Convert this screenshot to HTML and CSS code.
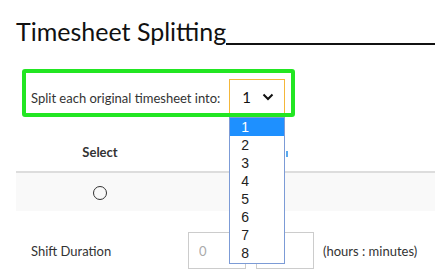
FILE: index.html
```html
<!DOCTYPE html>
<html lang="en">
<head>
    <meta charset="UTF-8">
    <title>Timesheet Splitting</title>
    <link rel="stylesheet" href="styles.css">
</head>
<body>

<div class="page">
    <h1 class="title">Timesheet Splitting<span class="rule"></span></h1>

    <div class="split-box">
        <span class="split-label">Split each original timesheet into:</span>
        <div class="select-wrap">
            <div class="fake-select">
                <span>1</span>
                <svg class="chevron" width="12" height="8" viewBox="0 0 12 8"><path d="M1.5 1.5 L6 6 L10.5 1.5" fill="none" stroke="#111" stroke-width="2"/></svg>
            </div>
            <ul class="options">
                <li class="active">1</li>
                <li>2</li>
                <li>3</li>
                <li>4</li>
                <li>5</li>
                <li>6</li>
                <li>7</li>
                <li>8</li>
            </ul>
        </div>
    </div>

    <table class="shifts">
        <thead>
            <tr>
                <th class="col-select">Select</th>
                <th class="col-rest"><span class="link-bit"></span></th>
            </tr>
        </thead>
        <tbody>
            <tr>
                <td class="col-select"><span class="radio"></span></td>
                <td></td>
            </tr>
        </tbody>
    </table>

    <div class="duration">
        <span class="duration-label">Shift Duration</span>
        <input type="text" class="time-input" placeholder="0">
        <input type="text" class="time-input">
        <span class="hint">(hours : minutes)</span>
    </div>
</div>

</body>
</html>
```

FILE: styles.css
```css
body {
    font-family: Lato, "Open Sans", sans-serif;
    color: #333;
    background: white;
    margin: 0;
}
.page {
    padding: 0 0 0 16px;
    overflow: hidden;
    height: 275px;
}
.title {
    display: flex;
    font-size: 25px;
    font-weight: normal;
    color: #111;
    margin: 15px 0 0;
    line-height: 32px;
    white-space: nowrap;
}
.rule {
    flex: 1;
    height: 28px;
    border-bottom: 2px solid #111;
}
.split-box {
    display: flex;
    width: 260px;
    height: 40px;
    margin: 22px 0 0 6px;
    border: 4px solid #22e622;
    border-radius: 3px;
    padding-left: 5px;
    box-sizing: content-box;
    font-size: 13px;
}
.split-label {
    margin-top: 17px;
}
.select-wrap {
    position: relative;
    margin-left: 9px;
    margin-top: 6px;
}
.fake-select {
    width: 56px;
    height: 34px;
    box-sizing: border-box;
    border: 1px solid #f4b73a;
    border-bottom: none;
    display: flex;
    align-items: center;
    padding-left: 12px;
    gap: 11px;
    font-size: 15px;
    color: #111;
}
.chevron {
    margin-top: 1px;
}
.options {
    position: absolute;
    left: 0;
    top: 38px;
    width: 56px;
    margin: 0;
    padding: 0 0 1px;
    list-style: none;
    background: white;
    border: 1px solid #7c9bd6;
    box-sizing: border-box;
    font-family: "Liberation Sans", Arial, sans-serif;
    font-size: 14px;
    z-index: 2;
}
.options li {
    height: 18px;
    line-height: 18px;
    padding-left: 11px;
    color: #222;
}
.options li.active {
    background: #1e90ff;
    color: white;
}
.shifts {
    width: 100%;
    border-collapse: collapse;
    font-size: 13px;
}
.shifts th {
    padding: 27px 0 11px;
    line-height: 16px;
    border-bottom: 2px solid #ddd;
    font-weight: bold;
}
.col-select {
    width: 168px;
    text-align: center;
}
.col-rest {
    text-align: left;
}
.link-bit {
    display: inline-block;
    width: 2px;
    height: 6px;
    background: #5aa9ee;
    margin-left: 102px;
}
.shifts td {
    background: #f9f9f9;
    height: 38px;
    padding: 0;
}
.radio {
    display: inline-block;
    width: 14px;
    height: 14px;
    border: 1px solid #333;
    border-radius: 50%;
    box-sizing: border-box;
    vertical-align: middle;
}
.duration {
    display: flex;
    align-items: center;
    margin-top: 21px;
    padding-left: 15px;
    font-size: 13px;
}
.duration-label {
    width: 157px;
}
.time-input {
    width: 58px;
    height: 37px;
    box-sizing: border-box;
    border: 1px solid #ccc;
    padding: 0 10px;
    margin-right: 10px;
    font-family: Lato, sans-serif;
    font-size: 13px;
}
.time-input::placeholder {
    color: #aaa;
}
.hint {
    margin-left: -1px;
}
```
